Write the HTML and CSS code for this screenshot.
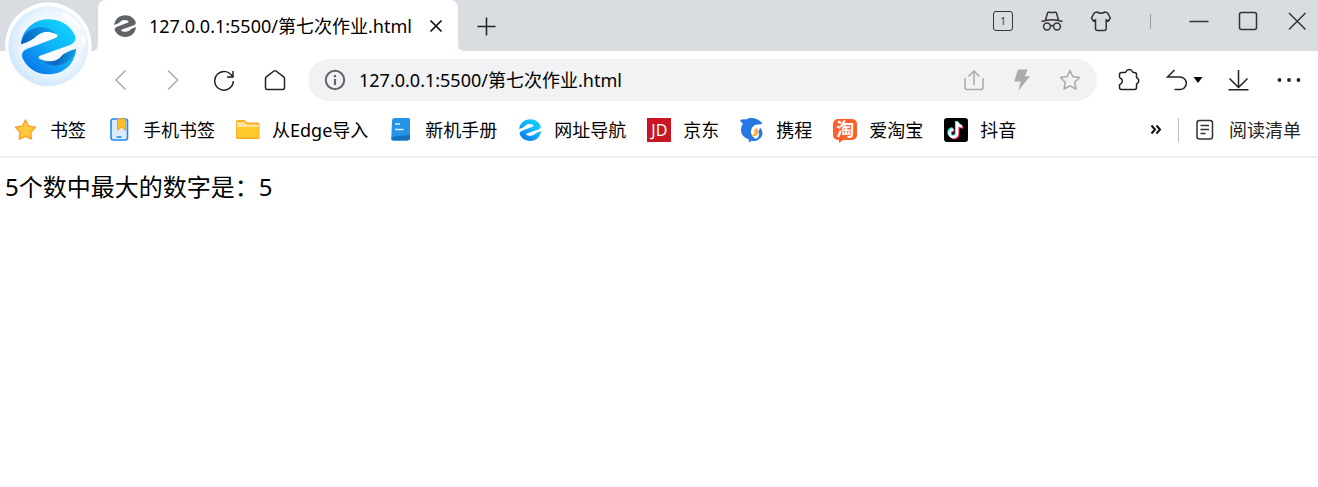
FILE: index.html
```
<!DOCTYPE html>
<html lang="zh-CN">
<head>
    <meta charset="UTF-8">
    <meta name="viewport" content="width=device-width, initial-scale=1.0">
    <title>127.0.0.1:5500/第七次作业.html</title>
    <link rel="stylesheet" href="styles.css">
</head>
<body>
    <!-- Shared shape of the browser mark -->
    <svg class="defs" aria-hidden="true">
        <defs>
            <linearGradient id="mark-blue" x1="0.9" y1="0.1" x2="0.2" y2="0.95">
                <stop offset="0" stop-color="#10d4fc"/>
                <stop offset="0.45" stop-color="#10b4fa"/>
                <stop offset="1" stop-color="#0a78ea"/>
            </linearGradient>
            <linearGradient id="mark-shade" x1="0" y1="0.6" x2="1" y2="0.3">
                <stop offset="0" stop-color="#0a62c4"/>
                <stop offset="1" stop-color="#10a4ec"/>
            </linearGradient>
            <linearGradient id="mark-shade-low" x1="0" y1="0.4" x2="1" y2="0.6">
                <stop offset="0" stop-color="#2a9df0"/>
                <stop offset="0.5" stop-color="#0d57b0"/>
                <stop offset="1" stop-color="#10a4ec"/>
            </linearGradient>
            <radialGradient id="ball" cx="0.55" cy="0.45" r="0.62">
                <stop offset="0" stop-color="#ffffff"/>
                <stop offset="0.6" stop-color="#eef6ff"/>
                <stop offset="1" stop-color="#c6e3fd"/>
            </radialGradient>
            <path id="mark" d="M63 132C66 88 102 57 146 57C190 57 216 84 226 108Q230 126 208 135L120 166Q112 171 119 176C142 188 172 184 182 170Q192 156 228 146C226 190 190 222 146 222C102 222 78 196 67 172Q62 154 80 146L168 112Q176 107 170 102C148 88 122 94 110 106Q98 120 63 132Z"/>
        </defs>
    </svg>

    <header class="browser">
        <div class="tab-strip">
            <div class="tab">
                <svg class="icon" viewBox="54 48 182 182"><use href="#mark" fill="#5f6368"/></svg>
                <span class="tab-title">127.0.0.1:5500/第七次作业.html</span>
                <button class="icon-btn" aria-label="关闭标签页">
                    <svg class="icon" viewBox="0 0 24 24"><path d="M6.500 6.500l11 11m0-11l-11 11" stroke="#111" stroke-width="1.7"/></svg>
                </button>
            </div>
            <button class="icon-btn new-tab" aria-label="新建标签页">
                <svg class="icon" viewBox="0 0 24 24"><path d="M12.500 3.500v18m-9-9h18" stroke="#222" stroke-width="1.5"/></svg>
            </button>
            <div class="window-controls">
                <button class="icon-btn tab-count" aria-label="标签页数量"><span>1</span></button>
                <button class="icon-btn" aria-label="无痕模式">
                    <svg class="icon line" viewBox="0 0 24 24"><path d="M5.500 11l2-7q.4-1 1.500-.8 3 .6 6 0 1.100-.2 1.500.8l2 7M1.500 12.500q10.500-3.500 21 0M10.300 17q1.700-1 3.400 0"/><circle cx="7" cy="17.500" r="3.400"/><circle cx="17" cy="17.500" r="3.400"/></svg>
                </button>
                <button class="icon-btn" aria-label="皮肤">
                    <svg class="icon line" viewBox="0 0 24 24"><path d="M8 3q4 2.400 8 0l2.500.8L21.300 9l-1.800 3-2.300-1v8.500q0 2-2 2H8.500q-2 0-2-2V11l-2.200 1L2.500 9l2.800-5.200z"/></svg>
                </button>
                <span class="strip-divider"></span>
                <button class="icon-btn" aria-label="最小化">
                    <svg class="icon line" viewBox="0 0 24 24"><path d="M2.500 12.500h19"/></svg>
                </button>
                <button class="icon-btn" aria-label="最大化">
                    <svg class="icon line" viewBox="0 0 24 24"><rect x="3.500" y="3.500" width="17" height="17" rx="2"/></svg>
                </button>
                <button class="icon-btn" aria-label="关闭">
                    <svg class="icon line" viewBox="0 0 24 24"><path d="M4 4l16.500 16.500m0-16.500L4 20.500"/></svg>
                </button>
            </div>
        </div>

        <button class="logo" aria-label="浏览器菜单">
            <svg viewBox="15 5 261 261">
                <circle cx="145" cy="136" r="130" fill="#fff"/>
                <circle cx="145" cy="138" r="120" fill="url(#ball)"/>
                <path d="M190 34Q226 50 246 82L236 90Q216 62 186 50Z" fill="#fff" opacity=".8"/>
                <path d="M242 106l12-5q4 16 2 30l-9 1q0-14-5-26z" fill="#fff" opacity=".8"/>
                <use href="#mark" fill="url(#mark-blue)"/>
                <path d="M63 132C68 100 88 84 120 80Q152 80 170 102C148 88 122 94 110 106Q98 120 63 132Z" fill="url(#mark-shade)"/>
                <path d="M119 176C142 188 172 184 182 170Q192 156 228 146C224 176 202 188 180 194Q142 200 119 176Z" fill="url(#mark-shade-low)" opacity=".85"/>
            </svg>
        </button>

        <div class="toolbar">
            <div class="nav-buttons">
                <button class="icon-btn" aria-label="后退" disabled>
                    <svg class="icon dim" viewBox="0 0 24 24"><path d="M15.500 2.500L6 12l9.500 9.500"/></svg>
                </button>
                <button class="icon-btn" aria-label="前进" disabled>
                    <svg class="icon dim" viewBox="0 0 24 24"><path d="M7 2.500l9.500 9.500L7 21.500"/></svg>
                </button>
                <button class="icon-btn" aria-label="刷新">
                    <svg class="icon dark" viewBox="0 0 24 24"><path d="M20.500 9A9.300 9.300 0 1 0 21.300 13M21 3v6h-6"/></svg>
                </button>
                <button class="icon-btn" aria-label="主页">
                    <svg class="icon dark" viewBox="0 0 24 24"><path d="M2.500 10.500q0-1 .8-1.600l7.700-5.900q1-.7 2 0l7.700 5.900q.8.600.8 1.600v9.500q0 1.500-1.500 1.500H4q-1.500 0-1.500-1.500z"/></svg>
                </button>
            </div>

            <form class="address-bar">
                <svg class="icon" viewBox="0 0 24 24" fill="none"><circle cx="12" cy="12" r="9.200" stroke="#5f6368" stroke-width="2"/><path d="M12 11v6M12 7v2.200" stroke="#5f6368" stroke-width="2.200"/></svg>
                <input type="text" aria-label="地址" value="127.0.0.1:5500/第七次作业.html">
                <div class="address-actions">
                    <button type="button" class="icon-btn" aria-label="分享">
                        <svg class="icon dim" viewBox="0 0 24 24"><path d="M3 10v9.500q0 2 2 2h14q2 0 2-2V10M12 17V3M6.500 8.500L12 3l5.500 5.500"/></svg>
                    </button>
                    <button type="button" class="icon-btn" aria-label="极速模式">
                        <svg class="icon" viewBox="0 0 24 24"><path d="M8 1.500h9.500L15 8.300h5L8.500 22.500l2.300-9H4.200z" fill="#a9aaab"/></svg>
                    </button>
                    <button type="button" class="icon-btn" aria-label="收藏">
                        <svg class="icon dim" viewBox="0 0 24 24"><path d="M12 2.500l2.900 6.100 6.600.9-4.800 4.700 1.200 6.800-5.900-3.200L6.100 21l1.200-6.800L2.500 9.500l6.600-.9z" stroke-linejoin="round"/></svg>
                    </button>
                </div>
            </form>

            <div class="tools">
                <button class="icon-btn" aria-label="扩展">
                    <svg class="icon dark" viewBox="0 0 24 24"><path d="M4.500 4.500H8q.6 0 .9-.8a3.700 3.700 0 0 1 6.700 0q.3.800.9.800h1q2 0 2 2V9q0 .7.700 1a3.200 3.200 0 0 1 0 5.500q-.7.300-.7 1v3q0 2-2 2h-13q-2 0-2-2v-2.300q0-.7.700-1a3.300 3.300 0 0 0 0-6.200q-.7-.3-.7-1V6.500q0-2 2-2z"/></svg>
                </button>
                <button class="icon-btn undo" aria-label="恢复关闭的标签页">
                    <svg class="icon dark" viewBox="0 0 24 24"><path d="M9.500 2L2.500 9H15a6.200 6.200 0 0 1 0 12.500H9.500"/></svg>
                    <svg class="caret" viewBox="0 0 10 6"><path d="M0.500 0h9L5 6z"/></svg>
                </button>
                <button class="icon-btn" aria-label="下载">
                    <svg class="icon dark" viewBox="0 0 24 24"><path d="M11.500 2v17M2.500 10.500l9 9 9-9M1.500 21.700h20"/></svg>
                </button>
                <button class="icon-btn more" aria-label="更多">
                    <svg class="icon" viewBox="0 0 24 24" fill="#222"><circle cx="2.500" cy="12" r="1.900"/><circle cx="12" cy="12" r="1.900"/><circle cx="21.500" cy="12" r="1.900"/></svg>
                </button>
            </div>
        </div>

        <nav class="bookmarks">
            <a href="#">
                <svg class="icon" viewBox="0 0 24 24"><path d="M11.500 2l3 6 7 1.200-4.800 5.100.8 6.700-6-2.700L5.300 21l.8-6.700-4.600-5.100 7-1.200z" fill="#ffc93c" stroke="#f9a32b" stroke-width="1.500" stroke-linejoin="round"/></svg>
                书签
            </a>
            <a href="#">
                <svg class="icon" viewBox="0 0 24 24"><rect x="4" y="1" width="16.500" height="21" rx="2.500" fill="#dceaff" stroke="#1e88f5" stroke-width="1.600"/><path d="M10.500 1h8v11.500L14.500 9l-4 3.500z" fill="#ffc02e" stroke="#f5a01c"/><path d="M9.500 19h5" stroke="#1e88f5" stroke-width="1.500"/></svg>
                手机书签
            </a>
            <a href="#">
                <svg class="icon" viewBox="0 0 24 24"><path d="M0 3.500q0-1.500 1.500-1.500h7l2.500 2.500h11q1.500 0 1.500 1.500v13.500q0 1.500-1.500 1.500h-20.500Q0 21 0 19.500z" fill="#fba925"/><path d="M.8 4h7.500L11 6.500h11.700V9H.8z" fill="#ffe39a"/><path d="M.8 9h21.900v9.500q0 1-1 1h-19.900q-1 0-1-1z" fill="#ffc92c"/></svg>
                从Edge导入
            </a>
            <a href="#">
                <svg class="icon" viewBox="0 0 24 24"><path d="M3 3q0-3 3-3h13.500q1.500 0 1.500 1.500V20q0 2.500-3 2.500H4.500Q2 22.500 2.300 20z" fill="#2594e6"/><path d="M2.400 20q1-1.500 3-1.500L21 17v3q0 2.500-3 2.500H4.500Q2 22.500 2.400 20z" fill="#1671bd"/><path d="M6 6h5M6 11.500h8.500" stroke="#d9f0ff" stroke-width="1.600"/></svg>
                新机手册
            </a>
            <a href="#">
                <svg class="icon" viewBox="54 48 182 182"><use href="#mark" fill="url(#mark-blue)"/></svg>
                网址导航
            </a>
            <a href="#">
                <span class="site-icon jd">JD</span>
                京东
            </a>
            <a href="#">
                <!-- dolphin -->
                <svg class="icon" viewBox="0 0 24 24"><path d="M0 2q3-1 6-.5 4-2.500 9-1 5.500 1.500 7.500 5.500l-4.500.5q-3.500-.5-5.500 2.500-3.500 5 .5 10 2 2.200 5 2.500-3 2.500-6.500 1l-1 1.500-2-.5.5-2Q.5 18.500 1 11.500q0-3.500 2-6Q.5 4.500 0 2z" fill="#2577e3"/><path d="M20 9.500q4.500 5 1 10-4 4.500-9.500 2 6.500 0 7.500-4.500.5-3-1.500-4 2 0 2.500-3.500z" fill="#2577e3"/><path d="M16 9.500q4.500 5 .5 8-2 1.500-5 0 4-1.500 2.500-5.500 1.500-.5 2-2.500z" fill="#ffb03b"/></svg>
                携程
            </a>
            <a href="#">
                <span class="site-icon taobao">淘</span>
                爱淘宝
            </a>
            <a href="#">
                <svg class="icon" viewBox="0 0 24 24"><rect width="24" height="24" rx="3"/><g fill="none" stroke-width="2.600"><path d="M13.200 4v11.500a3.800 3.800 0 1 1-3.800-4M13.200 4q.8 4 5 4.500" stroke="#25f4ee" transform="translate(-1 -1)"/><path d="M13.200 4v11.500a3.800 3.800 0 1 1-3.800-4M13.200 4q.8 4 5 4.500" stroke="#fe2c55" transform="translate(1 1)"/><path d="M13.200 4v11.500a3.800 3.800 0 1 1-3.800-4M13.200 4q.8 4 5 4.500" stroke="#fff"/></g></svg>
                抖音
            </a>
            <div class="bookmarks-end">
                <button class="icon-btn" aria-label="更多书签">
                    <svg class="icon" viewBox="0 0 24 24"><path d="M7.500 7.500l3.500 4-3.500 4M12.500 7.500l3.500 4-3.500 4" fill="none" stroke="#111" stroke-width="2"/></svg>
                </button>
                <a href="#" class="reading-list">
                    <svg class="icon line" viewBox="0 0 24 24"><rect x="4" y="2.500" width="15.500" height="18.500" rx="2.500"/><path d="M7.500 7.500h8.500M7.500 11.500h8.500M7.500 15.500h5"/></svg>
                    阅读清单
                </a>
            </div>
        </nav>
    </header>

    <main class="page">5个数中最大的数字是：5</main>
</body>
</html>
```
FILE: styles.css
```
:root {
    --strip: #d9dce1;
    --field: #f1f2f4;
    --border: #eeeeee;
    --text: #000000;
    --line: #333333;
    --dim: #a9aaab;
    --taobao: #ff5f2a;
}

* {
    margin: 0;
    padding: 0;
    box-sizing: border-box;
}

body {
    font-family: 'Noto Sans', 'Noto Sans CJK SC', sans-serif;
    font-size: 18px;
    line-height: 24px;
    color: var(--text);
    background: #fff;
}

.defs {
    position: absolute;
    width: 0;
    height: 0;
}

.icon {
    display: block;
    flex: none;
    width: 24px;
    height: 24px;
}

.line,
.dark,
.dim {
    fill: none;
    stroke: var(--line);
    stroke-width: 1.5;
}

.dark {
    stroke: #222;
}

.dim {
    stroke: var(--dim);
}

.icon-btn {
    display: flex;
    align-items: center;
    justify-content: center;
    flex: none;
    width: 24px;
    height: 24px;
    border: none;
    background: none;
    font-family: inherit;
}

.browser {
    position: relative;
    border-bottom: 2px solid var(--border);
}

/* Tab strip */
.tab-strip {
    display: flex;
    height: 51px;
    padding: 0 9px 0 98px;
    background: var(--strip);
}

.tab {
    position: relative;
    display: flex;
    align-items: center;
    gap: 12px;
    padding: 0 10px 0 15px;
    border-radius: 8px 8px 0 0;
    background: #fff;
    white-space: nowrap;
}

/* Curved feet of the active tab */
.tab::before,
.tab::after {
    content: '';
    position: absolute;
    bottom: 0;
    width: 6px;
    height: 6px;
}

.tab::before {
    right: 100%;
    background: radial-gradient(circle at 0 0, transparent 6px, #fff 6px);
}

.tab::after {
    left: 100%;
    background: radial-gradient(circle at 100% 0, transparent 6px, #fff 6px);
}

.new-tab {
    align-self: center;
    margin-left: 16px;
}

.window-controls {
    display: flex;
    align-items: center;
    gap: 25px;
    height: 42px;
    margin-left: auto;
}

.tab-count span {
    width: 20px;
    height: 20px;
    border: 1px solid #333;
    border-radius: 3px;
    color: #334;
    font-size: 10px;
    line-height: 18px;
}

.strip-divider {
    width: 24px;
    height: 15px;
    background: linear-gradient(#999, #999) center / 1px 100% no-repeat;
}

.logo {
    position: absolute;
    top: 2px;
    left: 5px;
    width: 87px;
    height: 87px;
    border: none;
    border-radius: 50%;
    background: none;
}

.logo svg {
    display: block;
}

/* Toolbar */
.toolbar {
    display: flex;
    align-items: center;
    gap: 20px;
    padding: 8px 15px 4px 110px;
}

.nav-buttons {
    display: flex;
    gap: 27px;
    padding-right: 1px;
}

.address-bar {
    flex: 1;
    display: flex;
    align-items: center;
    gap: 12px;
    min-width: 0;
    height: 42px;
    padding: 0 15px;
    border-radius: 21px;
    background: var(--field);
}

.address-bar input {
    flex: 1;
    min-width: 0;
    border: none;
    outline: none;
    background: none;
    color: var(--text);
    font: inherit;
}

.address-actions {
    display: flex;
    gap: 24px;
}

.tools {
    display: flex;
    gap: 24px;
}

.undo {
    width: 38px;
    gap: 4px;
}

.caret {
    flex: none;
    width: 10px;
    height: 6px;
}

.more {
    width: 28px;
}

/* Bookmarks */
.bookmarks {
    display: flex;
    align-items: center;
    gap: 21px;
    height: 51px;
    padding: 0 17px 2px 14px;
    white-space: nowrap;
}

.bookmarks a {
    display: flex;
    align-items: center;
    gap: 12px;
    color: var(--text);
    text-decoration: none;
}

.site-icon {
    width: 24px;
    height: 24px;
    color: #fff;
    text-align: center;
}

.jd {
    background: #c81623;
    font-size: 16px;
}

.taobao {
    position: relative;
    height: 21px;
    border-radius: 5px;
    background: var(--taobao);
    font-size: 18px;
    font-weight: 700;
    line-height: 20px;
}

/* Tail of the speech bubble */
.taobao::after {
    content: '';
    position: absolute;
    top: 100%;
    left: 6px;
    border-top: 3px solid var(--taobao);
    border-right: 4px solid transparent;
}

.bookmarks-end {
    display: flex;
    align-items: center;
    gap: 10px;
    margin-left: auto;
}

.bookmarks .reading-list {
    padding-left: 15px;
    color: #222;
    background: linear-gradient(#bbb, #bbb) left / 1px 100% no-repeat;
}

.page {
    padding: 11px 5px;
    font-size: 24px;
    line-height: 36px;
}
```
